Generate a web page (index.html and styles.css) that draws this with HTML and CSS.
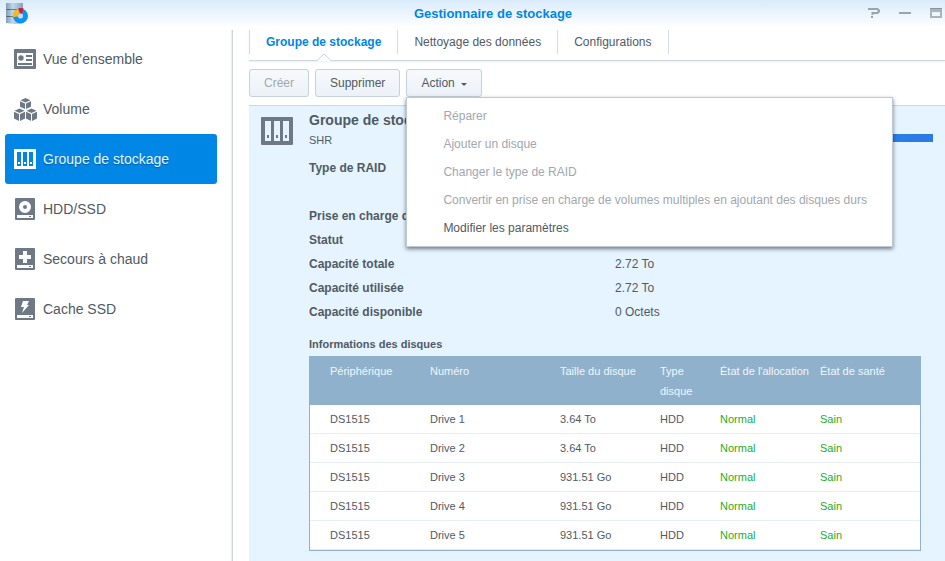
FILE: index.html
```
<!DOCTYPE html>
<html lang="fr">

<head>
    <meta charset="UTF-8">
    <meta name="viewport" content="width=device-width, initial-scale=1.0">
    <title>Gestionnaire de stockage</title>

    <link rel="stylesheet" href="styles.css">
</head>

<body>
    <header class="title-bar">
        <svg class="logo" width="24" height="24" viewBox="0 0 24 24">
            <defs>
                <linearGradient id="disk" x1="0" x2="1" y1="0" y2="0">
                    <stop offset="0" stop-color="#7f9db8" />
                    <stop offset="0.4" stop-color="#c3d8e8" />
                    <stop offset="1" stop-color="#86a3bd" />
                </linearGradient>
            </defs>
            <path d="M1 1h17v20l-8 1-9-1z" fill="url(#disk)" />
            <path d="M1 7.500h17M1 14.500h17" stroke="#6d7d8c" stroke-width="1" />
            <path d="M2 7.500h3M2 14.500h3" stroke="#55636f" stroke-width="1" />
            <circle cx="15.500" cy="14" r="5" fill="none" stroke="#0a95f5" stroke-width="5" />
            <path d="M8 15a7.500 7.500 0 0 1 5-8l2 4.500a2.500 2.500 0 0 0-2 3z" fill="#fdb813" />
            <path d="M13.500 6l5 .3-1.500 5.200a3 3 0 0 0-2 0z" fill="#e0162b" />
            <circle cx="15.500" cy="14" r="2.500" fill="#c5d9e8" />
        </svg>
        <h1>Gestionnaire de stockage</h1>
        <div class="window-buttons">
            <button type="button" aria-label="Aide">
                <svg width="12" height="12" viewBox="0 0 12 12">
                    <path d="M0 2h9.500L11 3.500v1L9.500 6H4.500v2" fill="none" stroke="#9ba4ad" stroke-width="2" />
                    <path d="M3 9h2v2H3z" fill="#9ba4ad" />
                </svg>
            </button>
            <button type="button" aria-label="Réduire">
                <svg width="12" height="12" viewBox="0 0 12 12">
                    <path d="M0 5h12v2H0z" fill="#9ba4ad" />
                </svg>
            </button>
            <button type="button" aria-label="Agrandir">
                <svg width="12" height="12" viewBox="0 0 12 12">
                    <path d="M1 2v8h10V2" fill="none" stroke="#aab4be" stroke-width="2" />
                    <path d="M0 1h12v1H0z" fill="#8a939c" />
                    <path d="M2 2h8v3H2z" fill="#aab4be" />
                </svg>
            </button>
        </div>
    </header>

    <div class="main">
        <nav class="sidebar">
            <a href="#">
                <svg width="24" height="24" viewBox="0 0 24 24">
                    <path fill="#6f7985" fill-rule="evenodd" d="M2 2h20a1 1 0 0 1 1 1v18a1 1 0 0 1-1 1H2a1 1 0 0 1-1-1V3a1 1 0 0 1 1-1zM4 6v13h16V6z" />
                    <circle cx="8" cy="11" r="2.700" fill="#6f7985" />
                    <path fill="#6f7985" d="M13 8h6v2h-6zM13 12h6v2h-6zM5 16h14v2H5z" />
                </svg>
                Vue d’ensemble
            </a>
            <a href="#">
                <svg width="24" height="24" viewBox="0 0 24 24">
                    <g fill="#6f7985">
                        <path d="M12.500 1l5 2.200-5 2.200-5-2.200zM7 4.200l5 2.200V12l-5-2.200zM18 4.200l-5 2.200V12l5-2.200z" />
                        <path d="M6.500 11.500l5 2.200-5 2.200-5-2.200zM1 14.700l5 2.200V24l-5-2.500zM12 14.700l-5 2.200V24l5-2.500z" />
                        <path d="M18.500 11.500l5 2.200-5 2.200-5-2.200zM13 14.700l5 2.200V24l-5-2.500zM24 14.700l-5 2.200V24l5-2.500z" />
                    </g>
                </svg>
                Volume
            </a>
            <a href="#" class="selected">
                <svg width="24" height="24" viewBox="0 0 24 24">
                    <path fill="#fff" fill-rule="evenodd" d="M1 2h22v20H1zM4 5v14h4V5zM10 5v14h4V5zM16 5v14h4V5z" />
                    <path fill="#fff" d="M5 15h2v2H5zM11 15h2v2h-2zM17 15h2v2h-2z" />
                </svg>
                Groupe de stockage
            </a>
            <a href="#">
                <svg width="24" height="24" viewBox="0 0 24 24">
                    <rect x="2" y="1" width="20" height="22" rx="1" fill="#6f7985" />
                    <circle cx="12" cy="10" r="4" fill="none" stroke="#fff" stroke-width="4" />
                    <path fill="#fff" fill-rule="evenodd" d="M4 18h16v3H4zM16 19v1h2v-1z" />
                </svg>
                HDD/SSD
            </a>
            <a href="#">
                <svg width="24" height="24" viewBox="0 0 24 24">
                    <rect x="2" y="1" width="20" height="22" rx="1" fill="#6f7985" />
                    <path fill="#fff" d="M10 4h4v4h4v4h-4v4h-4v-4H6V8h4z" />
                    <path fill="#fff" fill-rule="evenodd" d="M4 18h16v3H4zM16 19v1h2v-1z" />
                </svg>
                Secours à chaud
            </a>
            <a href="#">
                <svg width="24" height="24" viewBox="0 0 24 24">
                    <rect x="2" y="1" width="20" height="22" rx="1" fill="#6f7985" />
                    <path fill="#fff" d="M10 4h6l-2 4h2l-7 8 2-6H8z" />
                    <path fill="#fff" fill-rule="evenodd" d="M4 18h16v3H4zM16 19v1h2v-1z" />
                </svg>
                Cache SSD
            </a>
        </nav>

        <main class="content">
            <nav class="tabs">
                <a href="#" class="active">Groupe de stockage
                    <svg class="notch" width="14" height="8" viewBox="0 0 14 8">
                        <path d="M0 7l7-6 7 6v1H0z" fill="#fff" />
                        <path d="M0 7.500L7 1l7 6.500" fill="none" stroke="#cdd2d7" />
                    </svg>
                </a>
                <a href="#">Nettoyage des données</a>
                <a href="#">Configurations</a>
            </nav>

            <div class="toolbar">
                <button type="button" class="btn" disabled>Créer</button>
                <button type="button" class="btn">Supprimer</button>
                <div class="dropdown">
                    <button type="button" class="btn" aria-haspopup="true" aria-expanded="true">Action<span class="caret"></span></button>
                    <div class="menu">
                        <button type="button" disabled>Réparer</button>
                        <button type="button" disabled>Ajouter un disque</button>
                        <button type="button" disabled>Changer le type de RAID</button>
                        <button type="button" disabled>Convertir en prise en charge de volumes multiples en ajoutant des disques durs</button>
                        <button type="button">Modifier les paramètres</button>
                    </div>
                </div>
            </div>

            <section class="group">
                <svg class="group-icon" width="32" height="28" viewBox="0 0 32 28">
                    <path fill="#6f7985" fill-rule="evenodd" d="M1 0h30a1 1 0 0 1 1 1v26a1 1 0 0 1-1 1H1a1 1 0 0 1-1-1V1a1 1 0 0 1 1-1zM4 4v20h6V4zM13 4v20h6V4zM22 4v20h6V4z" />
                    <path fill="#6f7985" d="M6 18h2v3H6zM15 18h2v3h-2zM24 18h2v3h-2z" />
                </svg>
                <div class="group-body">
                    <div class="group-head">
                        <div>
                            <h2>Groupe de stockage 1</h2>
                            <p>SHR</p>
                        </div>
                        <div class="usage-bar"></div>
                    </div>

                    <dl class="details">
                        <dt class="two-lines">Type de RAID</dt>
                        <dd></dd>
                        <dt>Prise en charge de volumes multiples</dt>
                        <dd></dd>
                        <dt>Statut</dt>
                        <dd></dd>
                        <dt>Capacité totale</dt>
                        <dd>2.72 To</dd>
                        <dt>Capacité utilisée</dt>
                        <dd>2.72 To</dd>
                        <dt>Capacité disponible</dt>
                        <dd>0 Octets</dd>
                    </dl>

                    <h3 id="disks-title">Informations des disques</h3>
                    <table class="disks" aria-labelledby="disks-title">
                        <thead>
                            <tr>
                                <th class="col-device">Périphérique</th>
                                <th class="col-number">Numéro</th>
                                <th class="col-size">Taille du disque</th>
                                <th class="col-type">Type disque</th>
                                <th class="col-alloc">État de l'allocation</th>
                                <th>État de santé</th>
                            </tr>
                        </thead>
                        <tbody>
                            <tr>
                                <td>DS1515</td>
                                <td>Drive 1</td>
                                <td>3.64 To</td>
                                <td>HDD</td>
                                <td class="ok">Normal</td>
                                <td class="ok">Sain</td>
                            </tr>
                            <tr>
                                <td>DS1515</td>
                                <td>Drive 2</td>
                                <td>3.64 To</td>
                                <td>HDD</td>
                                <td class="ok">Normal</td>
                                <td class="ok">Sain</td>
                            </tr>
                            <tr>
                                <td>DS1515</td>
                                <td>Drive 3</td>
                                <td>931.51 Go</td>
                                <td>HDD</td>
                                <td class="ok">Normal</td>
                                <td class="ok">Sain</td>
                            </tr>
                            <tr>
                                <td>DS1515</td>
                                <td>Drive 4</td>
                                <td>931.51 Go</td>
                                <td>HDD</td>
                                <td class="ok">Normal</td>
                                <td class="ok">Sain</td>
                            </tr>
                            <tr>
                                <td>DS1515</td>
                                <td>Drive 5</td>
                                <td>931.51 Go</td>
                                <td>HDD</td>
                                <td class="ok">Normal</td>
                                <td class="ok">Sain</td>
                            </tr>
                        </tbody>
                    </table>
                </div>
            </section>
        </main>
    </div>
</body>

</html>
```
FILE: styles.css
```
* {
    box-sizing: border-box;
}

body {
    margin: 0;
    min-height: 100vh;
    display: flex;
    flex-direction: column;
    font-family: "Liberation Sans", Arial, sans-serif;
    font-size: 12px;
    color: #505a64;
    background-color: white;
}

h1, h2, h3, p, dl, dd {
    margin: 0;
}

a {
    color: inherit;
    text-decoration: none;
}

button {
    font: inherit;
    color: inherit;
}

/* title bar */
.title-bar {
    display: grid;
    grid-template-columns: 118px 1fr 77px;
    align-items: center;
    height: 30px;
    background: linear-gradient(#d9ebfa, #ffffff 28px);
}

.logo {
    margin: 0 0 2px 5px;
}

.title-bar h1 {
    font-size: 13px;
    line-height: 26px;
    text-align: center;
    color: #0086e5;
    height: 28px;
}

.window-buttons {
    display: flex;
    gap: 19px;
    height: 16px;
}

.window-buttons button {
    flex: none;
    width: 12px;
    height: 12px;
    padding: 0;
    border: none;
    background: none;
}

.window-buttons svg {
    display: block;
}

.main {
    flex: 1;
    display: flex;
}

/* left menu */
.sidebar {
    flex: none;
    width: 233px;
    padding: 4px 15px 0 5px;
    border-right: 1px solid #d0d4d8;
    box-shadow: inset -2px 0 2px -1px #e8eaec;
}

.sidebar a {
    display: flex;
    align-items: center;
    gap: 6px;
    height: 50px;
    padding-left: 8px;
    border-radius: 3px;
    font-size: 14px;
}

.sidebar .selected {
    background-color: #0086e5;
    color: #e6f4ff;
    text-shadow: 0 1px 1px rgba(0, 0, 0, 0.3);
}

.content {
    flex: 1;
    min-width: 0;
    margin-left: 16px;
    display: flex;
    flex-direction: column;
}

/* tabs */
.tabs {
    display: flex;
    align-items: flex-start;
    height: 31px;
    border-bottom: 1px solid #d2d6da;
    box-shadow: 0 1px 2px #eceef0;
}

.tabs a {
    position: relative;
    height: 24px;
    line-height: 24px;
    padding: 0 16px;
    border-right: 1px solid #d3dce4;
}

.tabs a:first-child {
    border-left: 1px solid #d3dce4;
}

.tabs .active {
    font-weight: bold;
    color: #0086e5;
}

.notch {
    position: absolute;
    left: 50%;
    bottom: -7px;
    margin-left: -7px;
}

/* toolbar */
.toolbar {
    display: flex;
    gap: 6px;
    padding: 8px 0;
}

.btn {
    display: flex;
    align-items: center;
    height: 28px;
    padding: 0 14px;
    border: 1px solid #c6d1dc;
    border-radius: 3px;
    background: linear-gradient(#f7fafc, #ebf1f7);
}

.btn:disabled {
    color: #a0a8b0;
}

.caret {
    margin: 3px 0 0 6px;
    border: 3px solid transparent;
    border-top-color: #505a64;
    border-bottom: none;
}

.dropdown {
    position: relative;
}

.menu {
    position: absolute;
    top: 28px;
    left: 0;
    z-index: 10;
    padding: 4px 0;
    border: 1px solid #bccad6;
    background-color: white;
    box-shadow: 0 2px 4px rgba(0, 0, 0, 0.5);
}

.menu button {
    display: block;
    width: 100%;
    height: 28px;
    padding: 0 25px 0 36px;
    border: none;
    background: none;
    text-align: left;
    white-space: nowrap;
}

.menu button:disabled {
    color: #a0a8b0;
}

/* storage group */
.group {
    flex: 1;
    display: flex;
    gap: 16px;
    padding: 4px 12px 10px;
    border-top: 1px solid #ccd9e4;
    background-color: #e6f4ff;
}

.group-icon {
    flex: none;
    margin-top: 7px;
}

.group-body {
    flex: 1;
    min-width: 0;
}

.group-head {
    display: flex;
    justify-content: space-between;
    height: 46px;
}

.group-head h2 {
    font-size: 14px;
    line-height: 20px;
}

.group-head p {
    font-size: 11px;
    line-height: 20px;
}

.usage-bar {
    width: 200px;
    height: 8px;
    margin-top: 24px;
    background: linear-gradient(90deg, #1e90f0, #2d79e6);
}

.details {
    display: grid;
    grid-template-columns: 306px 1fr;
    line-height: 24px;
}

.details dt {
    font-weight: bold;
}

.details .two-lines {
    height: 48px;
}

h3 {
    margin-top: 10px;
    font-size: 11px;
    line-height: 20px;
}

.disks {
    width: calc(100% - 12px);
    margin-top: 2px;
    table-layout: fixed;
    border: 1px solid #8fb1cc;
    border-spacing: 0;
    font-size: 11px;
    line-height: 20px;
    background-color: white;
}

.disks th,
.disks td {
    padding: 4px 0 4px 10px;
    text-align: left;
    vertical-align: top;
}

.disks th:first-child,
.disks td:first-child {
    padding-left: 20px;
}

.disks th {
    font-weight: normal;
    color: #f0f7fc;
    background-color: #8fb1cc;
}

.disks td {
    border-bottom: 1px solid #e6edf3;
}

.disks .ok {
    color: #1fad1f;
}

.col-device {
    width: 110px;
}

.col-number {
    width: 130px;
}

.col-size {
    width: 100px;
}

.col-type {
    width: 60px;
}

.col-alloc {
    width: 100px;
}
```
